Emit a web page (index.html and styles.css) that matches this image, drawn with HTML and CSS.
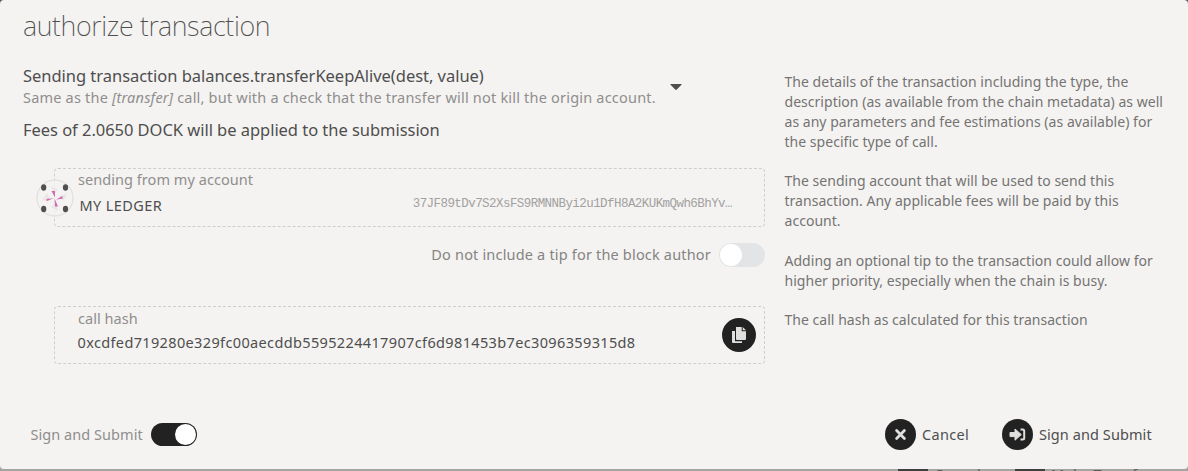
FILE: index.html
```html
<!DOCTYPE html>
<html lang="en">
<head>
<meta charset="utf-8">
<title>authorize transaction</title>
<link rel="stylesheet" href="styles.css">
</head>
<body>
<main class="modal">
  <h1 class="title">authorize transaction</h1>
  <div class="columns">
    <section class="content">
      <div class="call">
        <div>
          <div class="call-name">Sending transaction balances.transferKeepAlive(dest, value)</div>
          <div class="call-info">Same as the <em>[transfer]</em> call, but with a check that the transfer will not kill the origin account.</div>
        </div>
        <svg class="caret" width="12" height="6" viewBox="0 0 12 6"><path d="M1 0h10q1 0 .5.8L6.8 5.5q-.8.8-1.6 0L.5.8Q0 0 1 0z" fill="#4e4e4e"/></svg>
      </div>
      <div class="fees">Fees of 2.0650 DOCK will be applied to the submission</div>
      <div class="field account">
        <svg class="identicon" width="38" height="38" viewBox="0 0 38 38">
          <circle cx="19" cy="19" r="18" fill="#f4f2f2" fill-opacity=".8" stroke="#dddcdb"/>
          <g fill="#e7e7e6"><path d="M15 7l7 4-4 4zM31 15l-4 7-4-5zM22 32l-7-4 5-4zM6 22l5-8 3 6z"/></g>
          <g fill="#d468b3"><path d="M15.500 12h3.500v6.500zM26.500 17v2.700l-6.500.8zM22 27.500h-3l-.5-8zM10.500 22.300v-2.300l7-.8z"/></g>
          <g fill="#4f4f4f"><ellipse cx="7.700" cy="8.500" rx="2.600" ry="3.200"/><ellipse cx="29.500" cy="8.500" rx="2.600" ry="3.200"/><ellipse cx="7.700" cy="30" rx="2.600" ry="3.200"/><ellipse cx="29.500" cy="30" rx="2.600" ry="3.200"/></g>
        </svg>
        <div class="label">sending from my account</div>
        <div class="account-row"><span class="name">MY LEDGER</span><span class="address">37JF89tDv7S2XsFS9RMNNByi2u1DfH8A2KUKmQwh6BhYv…</span></div>
      </div>
      <div class="tip"><span class="tip-text">Do not include a tip for the block author</span><span class="toggle"></span></div>
      <div class="field hash">
        <div>
          <div class="label">call hash</div>
          <div class="hash-value">0xcdfed719280e329fc00aecddb5595224417907cf6d981453b7ec3096359315d8</div>
        </div>
        <svg class="copy" width="34" height="34" viewBox="0 0 34 34"><circle cx="17" cy="17" r="17" fill="#222"/><path d="M10 13h3v10.200h7V25h-9q-1 0-1-1zM14 9h5.700v4.300H24V21q0 1-1 1h-8q-1 0-1-1zM20.700 9l3.300 3.300h-3.300z" fill="#e0dfde"/></svg>
      </div>
    </section>
    <aside class="help">
      <p>The details of the transaction including the type, the<br>description (as available from the chain metadata) as well<br>as any parameters and fee estimations (as available) for<br>the specific type of call.</p>
      <p>The sending account that will be used to send this<br>transaction. Any applicable fees will be paid by this<br>account.</p>
      <p>Adding an optional tip to the transaction could allow for<br>higher priority, especially when the chain is busy.</p>
      <p>The call hash as calculated for this transaction</p>
    </aside>
  </div>
  <footer class="actions">
    <div class="sign"><span class="sign-text">Sign and Submit</span><span class="toggle on"></span></div>
    <div class="button cancel"><svg width="31" height="31" viewBox="0 0 31 31"><circle cx="15.500" cy="15.500" r="15.500" fill="#222"/><path d="M11.600 11.600l7.800 7.800M19.400 11.600l-7.800 7.800" stroke="#e0dfde" stroke-width="2.800" stroke-linecap="round"/></svg><span>Cancel</span></div>
    <div class="button submit"><svg width="31" height="31" viewBox="0 0 31 31"><circle cx="15.500" cy="15.500" r="15.500" fill="#222"/><path d="M8 13.500h5V10l6.300 5.600L13 21.200v-3.600H8z" fill="#e0dfde" stroke="#e0dfde" stroke-linejoin="round"/><path d="M18.500 10.600h2.200q1.500 0 1.500 1.500v7q0 1.500-1.500 1.500h-2.200" fill="none" stroke="#e0dfde" stroke-width="2"/></svg><span>Sign and Submit</span></div>
  </footer>
</main>
<div class="behind">
  <div class="behind-button behind-cancel"><i></i><span>Cancel</span></div>
  <div class="behind-button behind-transfer"><i></i><span>Make Transfer</span></div>
</div>
</body>
</html>
```
FILE: styles.css
```css
* { box-sizing: border-box; }
body {
  margin: 0;
  height: 471px;
  overflow: hidden;
  background: linear-gradient(#555 0 10px, #a5a4a3 10px);
  color: #4e4e4e;
  font: 14.5px/20px "Noto Sans", sans-serif;
  white-space: nowrap;
}
.modal {
  display: flex;
  flex-direction: column;
  height: 469px;
  padding: 7px 23px 0;
  background: #f4f3f1;
  border-radius: 4px;
}
.title {
  margin: 0;
  height: 58px;
  font-size: 27px;
  font-weight: 200;
  line-height: 37px;
  letter-spacing: -0.34px;
}
.columns { display: flex; gap: 20px; height: 354px; }
.content { width: 741.5px; }
.call { display: flex; height: 55px; }
.call-name { font-size: 16.5px; line-height: 21px; letter-spacing: -0.03px; }
.call-info { line-height: 22px; letter-spacing: 0.2px; color: #8f8e8d; }
.caret { margin: 19px 0 0 14px; }
.fees { font-size: 16.5px; line-height: 20px; letter-spacing: -0.04px; }
.field {
  position: relative;
  margin-left: 31px;
  width: 711px;
  padding-left: 23px;
  border: 1px dashed #cfcecd;
  border-radius: 4px;
}
.account { margin-top: 28px; height: 59px; }
.identicon { position: absolute; left: -19px; top: 10px; }
.label { line-height: 20px; letter-spacing: 0.05px; color: #8f8e8d; }
.account-row { display: flex; justify-content: space-between; padding: 6px 32px 0 1.5px; }
.name { letter-spacing: 0.4px; }
.address {
  font: 12.5px/19px "Liberation Mono", monospace;
  letter-spacing: -0.56px;
  color: #a2a1a0;
}
.tip { display: flex; justify-content: flex-end; gap: 8px; width: 742px; margin-top: 16px; height: 24px; line-height: 22px; }
.tip-text { letter-spacing: 0.18px; color: #858483; }
.toggle {
  display: flex;
  width: 46px;
  height: 24px;
  padding: 1px;
  border-radius: 12px;
  background: #e2e4e6;
}
.toggle::before { content: ""; width: 22px; height: 22px; border-radius: 50%; background: #fff; }
.toggle.on { justify-content: flex-end; height: 23px; background: #222; }
.toggle.on::before { width: 21px; height: 21px; }
.hash { display: flex; justify-content: space-between; margin-top: 39px; height: 58px; padding-right: 8px; }
.hash .label { line-height: 22px; }
.hash-value { margin-left: -0.5px; line-height: 26px; letter-spacing: 0.36px; }
.copy { margin-top: 11px; }
.help { padding-top: 7px; font-size: 14px; line-height: 20px; letter-spacing: 0.03px; color: #757473; }
.help p { margin: 0 0 19.3px; }
.actions { display: flex; align-items: center; height: 31px; }
.sign { display: flex; align-items: center; gap: 8px; margin-left: 7.5px; color: #8f8e8d; }
.sign-text { letter-spacing: 0.05px; }
.sign-text, .button span { padding-bottom: 2px; }
.button { display: flex; align-items: center; gap: 6px; }
.cancel { width: 117px; margin-left: auto; letter-spacing: 0.3px; }
.submit { width: 163px; letter-spacing: 0.08px; }
.behind {
  display: flex;
  height: 2px;
  padding-left: 898px;
  overflow: hidden;
  color: #5b5a5a;
}
.behind-button { display: flex; gap: 6px; }
.behind-button i { width: 30px; height: 2px; background: #403e3e; }
.behind-button span { line-height: 20px; margin-top: -5px; }
.behind-cancel { width: 117px; letter-spacing: 0.3px; }
.behind-transfer { letter-spacing: 0.3px; }
```
